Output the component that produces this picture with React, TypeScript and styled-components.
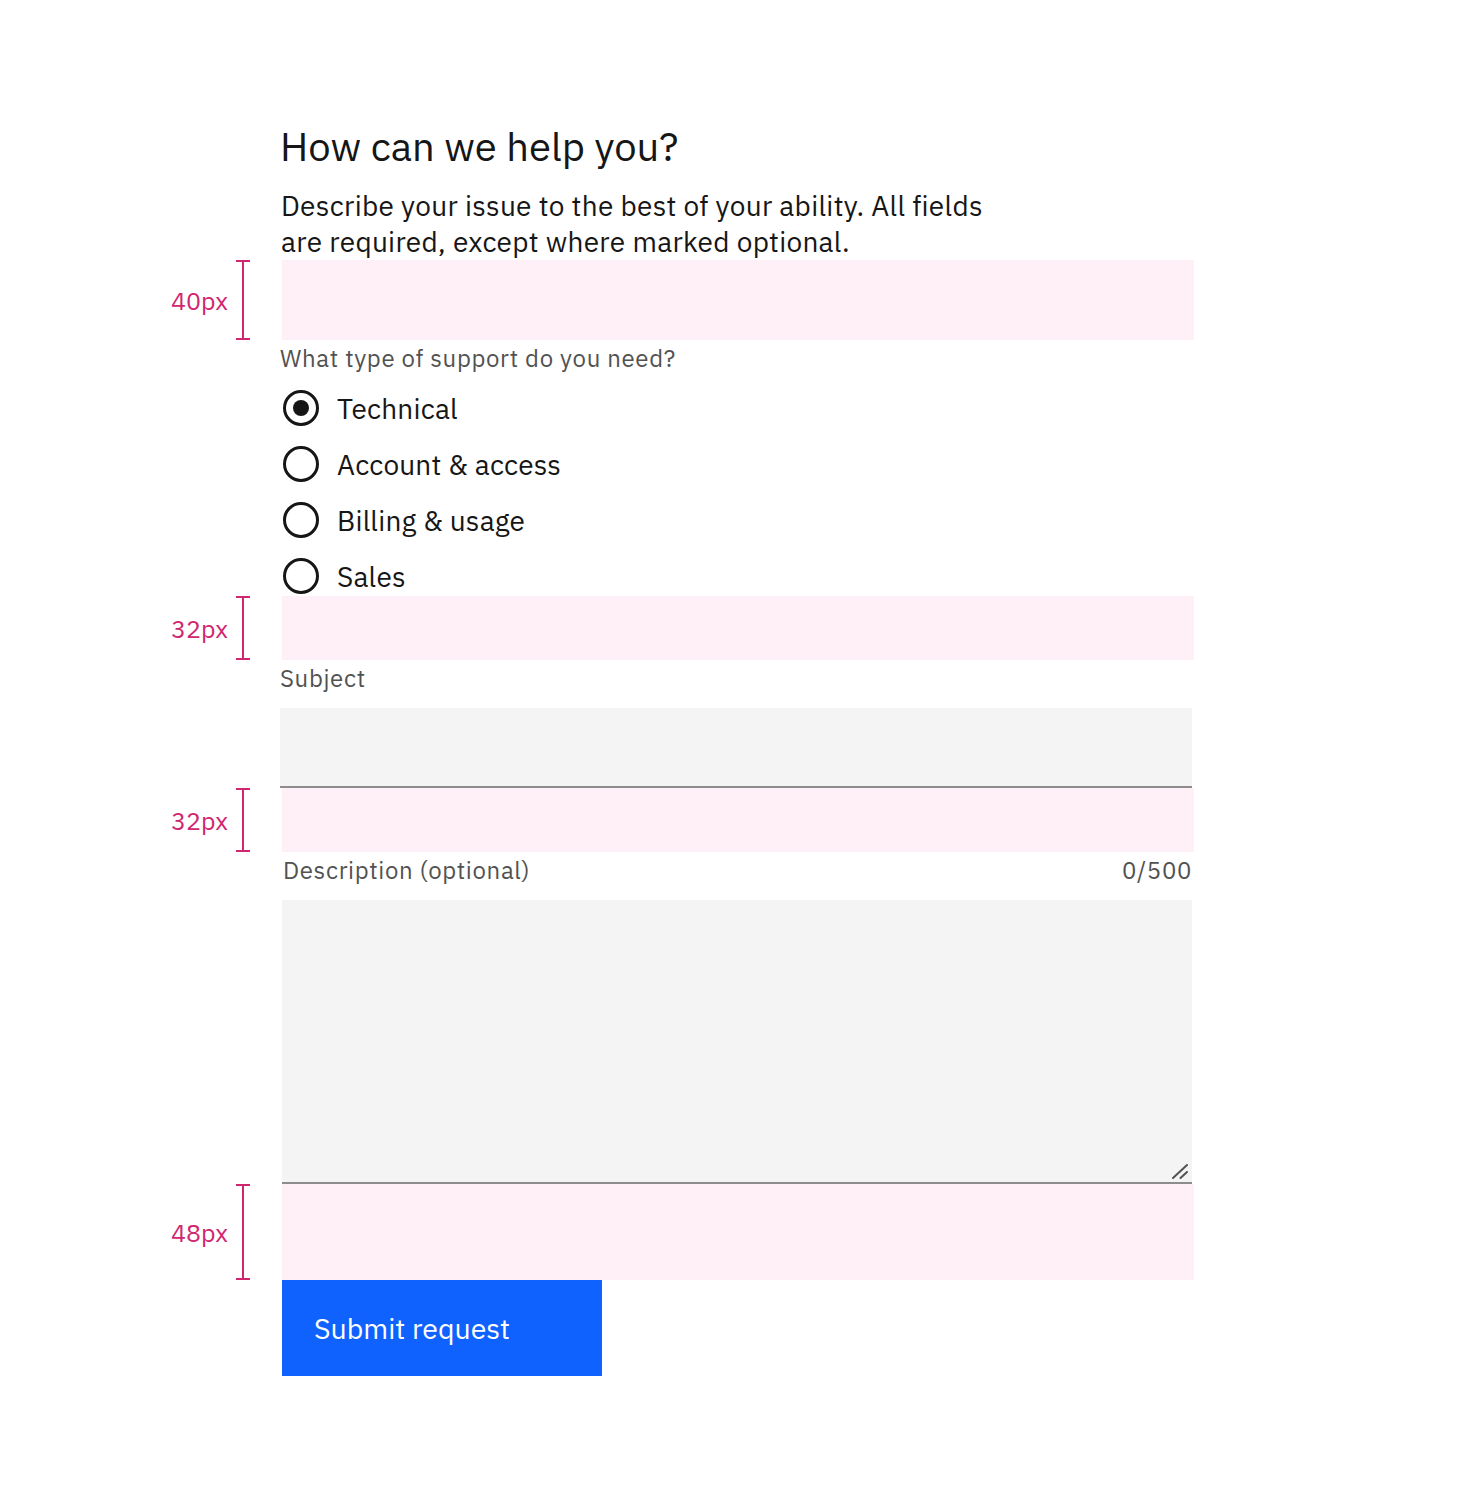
import React from 'react';
import styled, { createGlobalStyle } from 'styled-components';

const GlobalStyle = createGlobalStyle`
  html, body {
    margin: 0;
    padding: 0;
    background: #ffffff;
  }
  body {
    font-family: 'IBM Plex Sans', 'Noto Sans', sans-serif;
    color: #161616;
  }
  * {
    box-sizing: border-box;
  }
`;

const Page = styled.main`
  min-height: 1504px;
  padding: 122px 0 0 280px;
`;

const Form = styled.form`
  display: flex;
  flex-direction: column;
  align-items: flex-start;
  width: 915px;
`;

const Heading = styled.h1`
  margin: 0 0 18px;
  font-size: 40px;
  line-height: 48px;
  font-weight: 400;
  color: #161616;
`;

const Intro = styled.p`
  margin: 0 0 0 1px;
  font-size: 28px;
  line-height: 36px;
  letter-spacing: 0.3px;
  white-space: nowrap;
`;

const Spacer = styled.div<{ $size: number }>`
  position: relative;
  width: 912px;
  height: ${(p) => p.$size * 2}px;
  margin-left: 2px;
  background: #fff0f7;
`;

const Callout = styled.div`
  position: absolute;
  top: 0;
  bottom: 0;
  right: calc(100% + 32px);
  display: flex;
  align-items: center;
  gap: 8px;
  color: #d02670;
  font-size: 25px;
`;

const Bracket = styled.span`
  position: relative;
  width: 14px;
  height: 100%;
  border-top: 2px solid #d02670;
  border-bottom: 2px solid #d02670;

  &::before {
    content: '';
    position: absolute;
    top: 0;
    bottom: 0;
    left: 6px;
    width: 2px;
    background: #d02670;
  }
`;

const FieldLabel = styled.label`
  display: block;
  margin: 0 0 12px;
  font-size: 24px;
  line-height: 36px;
  letter-spacing: 0.65px;
  color: #525252;
`;

const LabelRow = styled.div`
  display: flex;
  justify-content: space-between;
  width: 909px;
  margin-left: 3px;
`;

const RadioGroup = styled.div`
  display: flex;
  flex-direction: column;
  gap: 16px;
  margin-left: 3px;
`;

const RadioRow = styled.label`
  display: flex;
  align-items: center;
  gap: 18px;
  height: 40px;
  font-size: 28px;
  letter-spacing: 0.2px;
  color: #161616;
  cursor: pointer;
`;

const RadioCircle = styled.span<{ $checked: boolean }>`
  display: flex;
  align-items: center;
  justify-content: center;
  width: 36px;
  height: 36px;
  border: 3px solid #161616;
  border-radius: 50%;

  &::after {
    content: '';
    display: ${(p) => (p.$checked ? 'block' : 'none')};
    width: 16px;
    height: 16px;
    border-radius: 50%;
    background: #161616;
  }
`;

const TextInput = styled.input`
  width: 912px;
  height: 80px;
  padding: 0 32px;
  border: 0;
  border-bottom: 2px solid #8d8d8d;
  background: #f4f4f4;
  font: inherit;
  font-size: 28px;
  outline: none;
`;

const AreaWrap = styled.div`
  position: relative;
  margin-left: 2px;
`;

const TextArea = styled.textarea`
  display: block;
  width: 910px;
  height: 284px;
  padding: 22px 32px;
  border: 0;
  border-bottom: 2px solid #8d8d8d;
  background: #f4f4f4;
  font: inherit;
  font-size: 28px;
  resize: none;
  outline: none;
`;

const Grip = styled.svg`
  position: absolute;
  right: 4px;
  bottom: 5px;
  width: 16px;
  height: 16px;
  pointer-events: none;
`;

const SubmitButton = styled.button`
  display: flex;
  align-items: center;
  width: 320px;
  height: 96px;
  margin-left: 2px;
  padding: 0 32px;
  border: 0;
  background: #0f62fe;
  color: #ffffff;
  font: inherit;
  font-size: 28.5px;
  text-align: left;
  cursor: pointer;
`;

function Gap({ size }: { size: number }) {
  return (
    <Spacer $size={size}>
      <Callout>
        <span>{size}px</span>
        <Bracket />
      </Callout>
    </Spacer>
  );
}

const options = ['Technical', 'Account & access', 'Billing & usage', 'Sales'];

export default function App() {
  const [support, setSupport] = React.useState('Technical');

  return (
    <>
      <GlobalStyle />
      <Page>
        <Form onSubmit={(e) => e.preventDefault()}>
          <Heading>How can we help you?</Heading>
          <Intro>
            Describe your issue to the best of your ability. All fields
            <br />
            are required, except where marked optional.
          </Intro>

          <Gap size={40} />

          <FieldLabel as="div">What type of support do you need?</FieldLabel>
          <RadioGroup role="radiogroup">
            {options.map((opt) => (
              <RadioRow key={opt} onClick={() => setSupport(opt)}>
                <RadioCircle $checked={support === opt} />
                {opt}
              </RadioRow>
            ))}
          </RadioGroup>

          <Gap size={32} />

          <FieldLabel htmlFor="subject">Subject</FieldLabel>
          <TextInput id="subject" type="text" />

          <Gap size={32} />

          <LabelRow>
            <FieldLabel htmlFor="description">Description (optional)</FieldLabel>
            <FieldLabel as="span">0/500</FieldLabel>
          </LabelRow>
          <AreaWrap>
            <TextArea id="description" maxLength={500} />
            <Grip viewBox="0 0 16 16">
              <path
                d="M1 15 L15 2 M8.5 15 L15 9"
                stroke="#525252"
                strokeWidth="2"
                strokeLinecap="round"
                fill="none"
              />
            </Grip>
          </AreaWrap>

          <Gap size={48} />

          <SubmitButton type="submit">Submit request</SubmitButton>
        </Form>
      </Page>
    </>
  );
}
